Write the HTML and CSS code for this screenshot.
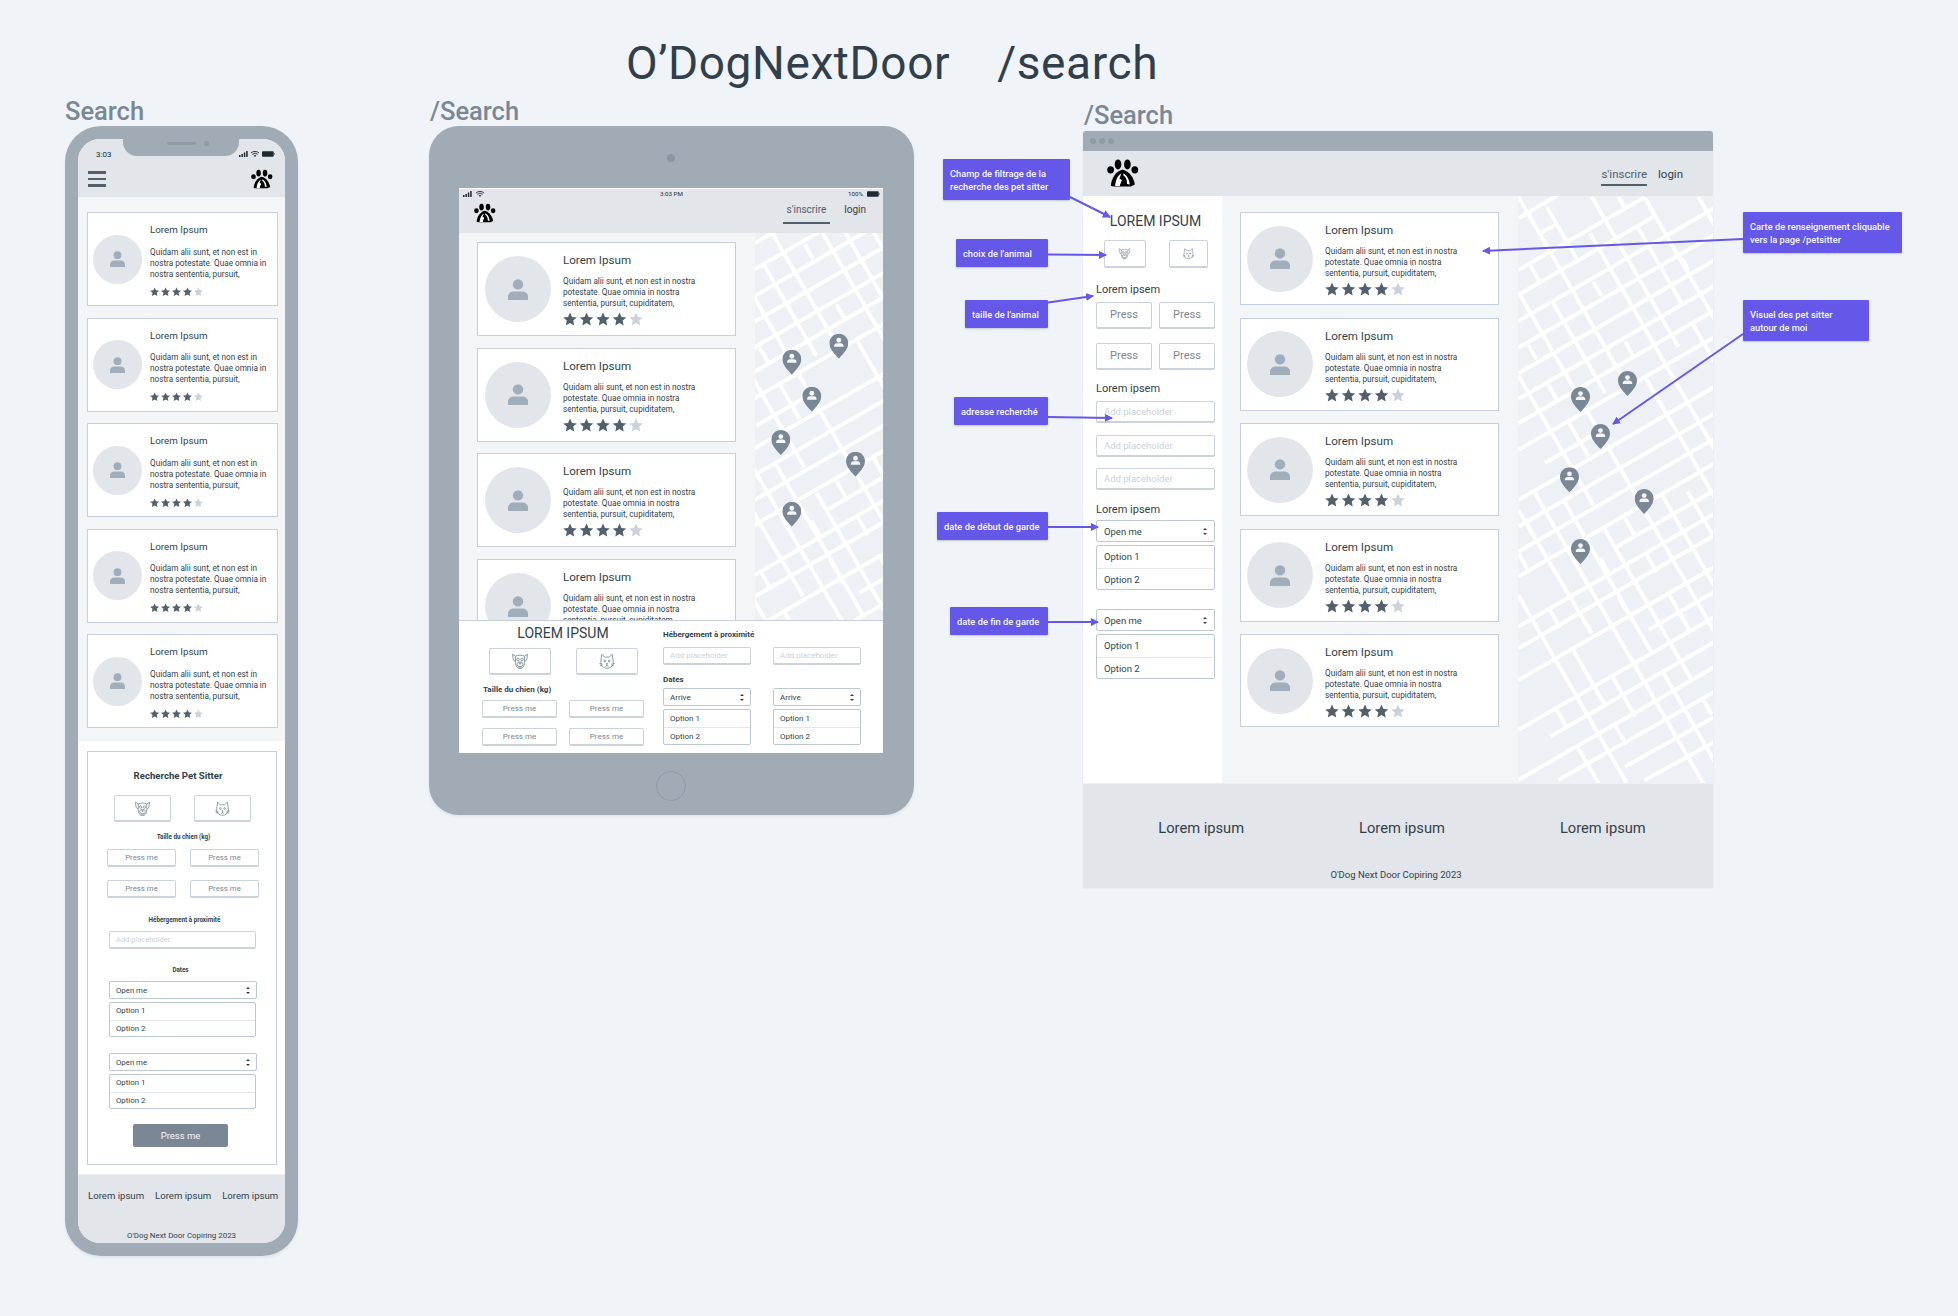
FILE: index.html
```html
<!DOCTYPE html>
<html lang="fr">

<head>
    <meta charset="UTF-8">
    <meta name="viewport" content="width=device-width, initial-scale=1.0">
    <title>O'DogNextDoor /search</title>
    <link rel="stylesheet" href="styles.css">
</head>

<body>
    <!-- icones partagees -->
    <svg class="sprite">
        <defs>
            <symbol id="person" viewBox="0 0 20 21">
                <circle cx="10" cy="5.4" r="5.2" fill="#a0aebb"/>
                <path d="M0 21v-3.2C0 14.6 2.6 12.6 6 12.6h8c3.4 0 6 2 6 5.2V21z" fill="#a0aebb"/>
            </symbol>
            <symbol id="star" viewBox="0 0 14 14">
                <path d="M7 .4l2 4.5 4.8.5-3.6 3.2 1 4.8L7 11l-4.2 2.4 1-4.8L.2 5.4 5 4.9z"/>
            </symbol>
            <symbol id="stars" viewBox="0 0 80 14">
                <use href="#star" x="0" width="14" height="14" fill="#52606d"/>
                <use href="#star" x="16.5" width="14" height="14" fill="#52606d"/>
                <use href="#star" x="33" width="14" height="14" fill="#52606d"/>
                <use href="#star" x="49.5" width="14" height="14" fill="#52606d"/>
                <use href="#star" x="66" width="14" height="14" fill="#cbd2d9"/>
            </symbol>
            <symbol id="logo" viewBox="0 0 32 28">
                <ellipse cx="3.6" cy="10.8" rx="3.4" ry="3.6"/>
                <ellipse cx="11" cy="5.4" rx="3.3" ry="5"/>
                <ellipse cx="20.4" cy="5.4" rx="3.3" ry="5"/>
                <ellipse cx="27.8" cy="10.8" rx="3.4" ry="3.6"/>
                <path d="M3.8 27C4.4 19 9 12.4 15.6 10.6 22.4 12.4 27 19 27.8 25.6L24 27.4H7.4z"/>
                <path d="M8.2 27C8.4 21 11 16.2 14.4 14.6L12.4 19.4 14.8 21 12.8 27zM16.4 14.4C19.4 15.6 22.4 20 22.8 25.6L20 25C20.4 21.6 18.8 17.6 16.4 16.4z" fill="#fff"/>
                <path d="M14.4 23l1.6 4h-3zM17 24.4l2 2.6h-3.2z"/>
            </symbol>
            <symbol id="dog" viewBox="0 0 24 24">
                <g fill="none" stroke="#7b8794" stroke-width="1.1" stroke-linejoin="round">
                    <path d="M6 5.6C8 4 16 4 18 5.6V14c0 5-3 8-6 8s-6-3-6-8z"/>
                    <path d="M6 5.6L2 3l1 7.4L6 13M18 5.6L22 3l-1 7.4L18 13"/>
                    <circle cx="9.4" cy="10" r="1.7"/>
                    <circle cx="14.6" cy="10" r="1.7"/>
                    <ellipse cx="12" cy="16.4" rx="4" ry="3.2"/>
                    <path d="M10.6 15h2.8L12 16.6zM9.6 22l2.4-2.4 2.4 2.4"/>
                </g>
            </symbol>
            <symbol id="cat" viewBox="0 0 24 24">
                <g fill="none" stroke="#7b8794" stroke-width="1.1" stroke-linejoin="round">
                    <path d="M5 3l4.4 4c1.6-.5 3.6-.5 5.2 0L19 3l1.4 11c0 4.6-4 7.6-8.4 7.6S3.6 18.6 3.6 14z"/>
                    <circle cx="9" cy="12" r="1.2"/>
                    <circle cx="15" cy="12" r="1.2"/>
                    <path d="M11 15.4h2L12 16.6zM12 16.6V18l-2 1M12 18l2 1"/>
                    <path d="M2 15.4l4 .8M2.4 18.6l3.8-1M22 15.4l-4 .8M21.6 18.6l-3.8-1"/>
                </g>
            </symbol>
            <symbol id="pin" viewBox="0 0 19 25">
                <path d="M9.5 0C4.3 0 0 4.2 0 9.4c0 6 5.8 11.4 9.5 15.6C13.2 20.8 19 15.4 19 9.4 19 4.2 14.7 0 9.5 0z" fill="#7b8794"/>
                <circle cx="9.5" cy="6.6" r="2.4" fill="#f5f7fa"/>
                <path d="M4.8 13v-.8c0-1.6 1.2-2.6 2.8-2.6h3.8c1.6 0 2.8 1 2.8 2.6v.8z" fill="#f5f7fa"/>
            </symbol>
            <symbol id="signal" viewBox="0 0 9 6">
                <path d="M0 4h1.5v2H0zM2.4 3h1.5v3H2.4zM4.8 1.5h1.5V6H4.8zM7.2 0h1.5v6H7.2z" fill="#1f2933"/>
            </symbol>
            <symbol id="wifi" viewBox="0 0 8 6">
                <path d="M0 2a5.8 5.8 0 0 1 8 0M1.3 3.3a4 4 0 0 1 5.4 0" fill="none" stroke="#1f2933" stroke-width=".9"/>
                <path d="M2.7 4.5a2 2 0 0 1 2.6 0L4 6z" fill="#1f2933"/>
            </symbol>
            <symbol id="battery" viewBox="0 0 14 6">
                <rect width="12.6" height="6" rx="1" fill="#1f2933"/>
                <rect x="13" y="2" width="1" height="2" fill="#7b8794"/>
            </symbol>
            <g id="streets" fill="none" stroke="#fff" stroke-width="12">
                <path d="M10 70L130 0M10 225L390 6M20 294L420 63M10 378L600 38M10 458L600 118M10 535L600 195M10 612L600 272M10 685L600 345M10 765L600 425M90 804L240 717M10 915L600 575M10 995L600 655M10 1070L600 730M10 1145L600 805M300 1058L600 885M10 1295L600 955M10 1360L600 1020M10 1455L600 1115M400 1305L600 1190M10 1605L600 1265M105 1625L600 1340M10 1755L600 1415M130 1755L600 1490M330 1715L600 1565M390 1755L600 1640M75 115L120 90"/>
                <path d="M95 35L185 191M390 545L600 909M390 10L600 374M550 5L600 92M10 5L320 542M518 890L600 1032M225 115L600 765M230 5L490 455M370 100L500 325M10 291L600 1313M115 325L270 594M10 541L235 930M270 1005L530 1455M440 898L600 1175M145 914L410 1373M445 1433L600 1702M10 945L230 1315M60 895L600 1826M10 1201L335 1764"/>
                <path d="M310 5L330 40M45 210L75 262M40 450L65 493M100 570L125 613M235 260L260 303M330 440L355 483M500 190L520 225M160 680L220 784M535 390L600 503M330 970L360 1022M395 1080L425 1132M105 1245L135 1297M255 1090L280 1133M310 1205L350 1274M460 1195L525 1308M175 1365L270 1530M295 1450L360 1563M125 1545L155 1597M190 1660L260 1781M300 1590L335 1650M565 1515L590 1558M10 1075L40 1127"/>
            </g>
            <g id="pins">
                <use href="#pin" x="309" y="528" width="57" height="75"/>
                <use href="#pin" x="168" y="576" width="57" height="75"/>
                <use href="#pin" x="228" y="687" width="57" height="75"/>
                <use href="#pin" x="135" y="817" width="57" height="75"/>
                <use href="#pin" x="359" y="882" width="57" height="75"/>
                <use href="#pin" x="168" y="1032" width="57" height="75"/>
            </g>
            <marker id="arrowhead" viewBox="0 0 8 8" refX="7" refY="4" markerWidth="8" markerHeight="8" markerUnits="userSpaceOnUse" orient="auto">
                <path d="M0 0L8 4L0 8z" fill="#6558e9"/>
            </marker>
        </defs>
    </svg>

    <div class="board">
        <h1 class="title"><span>O’DogNextDoor</span><span>/search</span></h1>

        <!-- mobile -->
        <h2 class="label label-phone">Search</h2>
        <div class="phone">
            <div class="phone-notch"><i></i><b></b></div>
            <div class="phone-screen">
                <div class="phone-head">
                    <div class="phone-status">
                        <span>3:03</span>
                        <div class="status-icons">
                            <svg class="ic-signal"><use href="#signal"/></svg>
                            <svg class="ic-wifi"><use href="#wifi"/></svg>
                            <svg class="ic-battery"><use href="#battery"/></svg>
                        </div>
                    </div>
                    <div class="phone-bar">
                        <div class="burger"><i></i><i></i><i></i></div>
                        <svg class="logo"><use href="#logo"/></svg>
                    </div>
                </div>
                <div class="cards">
                    <div class="card">
                        <div class="avatar"><svg class="person"><use href="#person"/></svg></div>
                        <div class="card-body">
                            <h3>Lorem Ipsum</h3>
                            <p>Quidam alii sunt, et non est in<br>nostra potestate. Quae omnia in<br>nostra sententia, pursuit,</p>
                            <svg class="stars"><use href="#stars"/></svg>
                        </div>
                    </div>
                    <div class="card">
                        <div class="avatar"><svg class="person"><use href="#person"/></svg></div>
                        <div class="card-body">
                            <h3>Lorem Ipsum</h3>
                            <p>Quidam alii sunt, et non est in<br>nostra potestate. Quae omnia in<br>nostra sententia, pursuit,</p>
                            <svg class="stars"><use href="#stars"/></svg>
                        </div>
                    </div>
                    <div class="card">
                        <div class="avatar"><svg class="person"><use href="#person"/></svg></div>
                        <div class="card-body">
                            <h3>Lorem Ipsum</h3>
                            <p>Quidam alii sunt, et non est in<br>nostra potestate. Quae omnia in<br>nostra sententia, pursuit,</p>
                            <svg class="stars"><use href="#stars"/></svg>
                        </div>
                    </div>
                    <div class="card">
                        <div class="avatar"><svg class="person"><use href="#person"/></svg></div>
                        <div class="card-body">
                            <h3>Lorem Ipsum</h3>
                            <p>Quidam alii sunt, et non est in<br>nostra potestate. Quae omnia in<br>nostra sententia, pursuit,</p>
                            <svg class="stars"><use href="#stars"/></svg>
                        </div>
                    </div>
                    <div class="card">
                        <div class="avatar"><svg class="person"><use href="#person"/></svg></div>
                        <div class="card-body">
                            <h3>Lorem Ipsum</h3>
                            <p>Quidam alii sunt, et non est in<br>nostra potestate. Quae omnia in<br>nostra sententia, pursuit,</p>
                            <svg class="stars"><use href="#stars"/></svg>
                        </div>
                    </div>
                </div>
                <div class="phone-panel">
                    <div class="search-card">
                        <h4 class="search-title">Recherche Pet Sitter</h4>
                        <div class="tiles">
                            <div class="tile"><svg class="ic-animal"><use href="#dog"/></svg></div>
                            <div class="tile"><svg class="ic-animal"><use href="#cat"/></svg></div>
                        </div>
                        <h5 class="mini-a">Taille du chien (kg)</h5>
                        <div class="press-grid">
                            <div class="press">Press me</div>
                            <div class="press">Press me</div>
                            <div class="press">Press me</div>
                            <div class="press">Press me</div>
                        </div>
                        <h5 class="mini-b">Hébergement à proximité</h5>
                        <div class="input">Add placeholder</div>
                        <h5 class="mini-c">Dates</h5>
                        <div class="select">Open me<span class="updown"></span></div>
                        <div class="options"><div>Option 1</div><div>Option 2</div></div>
                        <div class="select select-next">Open me<span class="updown"></span></div>
                        <div class="options"><div>Option 1</div><div>Option 2</div></div>
                        <div class="cta">Press me</div>
                    </div>
                </div>
                <div class="phone-foot">
                    <div class="foot-links"><span>Lorem ipsum</span><span>Lorem ipsum</span><span>Lorem ipsum</span></div>
                    <div class="foot-copy">O'Dog Next Door Copiring 2023</div>
                </div>
            </div>
        </div>

        <!-- tablette -->
        <h2 class="label label-tablet">/Search</h2>
        <div class="tablet">
            <div class="camera"></div>
            <div class="tablet-screen">
                <div class="tablet-head">
                    <div class="tablet-status">
                        <div class="status-left">
                            <svg class="ic-signal"><use href="#signal"/></svg>
                            <svg class="ic-wifi"><use href="#wifi"/></svg>
                        </div>
                        <span class="status-time">3:03 PM</span>
                        <div class="status-right">
                            <span>100%</span>
                            <svg class="ic-battery"><use href="#battery"/></svg>
                        </div>
                    </div>
                    <div class="tablet-bar">
                        <svg class="logo"><use href="#logo"/></svg>
                        <nav class="nav">
                            <a class="nav-on">s'inscrire</a>
                            <a>login</a>
                        </nav>
                    </div>
                </div>
                <div class="tablet-main">
                    <div class="cards">
                        <div class="card">
                            <div class="avatar"><svg class="person"><use href="#person"/></svg></div>
                            <div class="card-body">
                                <h3>Lorem Ipsum</h3>
                                <p>Quidam alii sunt, et non est in nostra<br>potestate. Quae omnia in nostra<br>sententia, pursuit, cupiditatem,</p>
                                <svg class="stars"><use href="#stars"/></svg>
                            </div>
                        </div>
                        <div class="card">
                            <div class="avatar"><svg class="person"><use href="#person"/></svg></div>
                            <div class="card-body">
                                <h3>Lorem Ipsum</h3>
                                <p>Quidam alii sunt, et non est in nostra<br>potestate. Quae omnia in nostra<br>sententia, pursuit, cupiditatem,</p>
                                <svg class="stars"><use href="#stars"/></svg>
                            </div>
                        </div>
                        <div class="card">
                            <div class="avatar"><svg class="person"><use href="#person"/></svg></div>
                            <div class="card-body">
                                <h3>Lorem Ipsum</h3>
                                <p>Quidam alii sunt, et non est in nostra<br>potestate. Quae omnia in nostra<br>sententia, pursuit, cupiditatem,</p>
                                <svg class="stars"><use href="#stars"/></svg>
                            </div>
                        </div>
                        <div class="card">
                            <div class="avatar"><svg class="person"><use href="#person"/></svg></div>
                            <div class="card-body">
                                <h3>Lorem Ipsum</h3>
                                <p>Quidam alii sunt, et non est in nostra<br>potestate. Quae omnia in nostra<br>sententia, pursuit, cupiditatem,</p>
                                <svg class="stars"><use href="#stars"/></svg>
                            </div>
                        </div>
                    </div>
                    <svg class="map" viewBox="86 226 384 1161" preserveAspectRatio="none">
                        <use href="#streets"/>
                        <use href="#pins"/>
                    </svg>
                </div>
                <div class="tablet-panel">
                    <div class="panel-left">
                        <h4 class="panel-title">LOREM IPSUM</h4>
                        <div class="tiles">
                            <div class="tile"><svg class="ic-animal"><use href="#dog"/></svg></div>
                            <div class="tile"><svg class="ic-animal"><use href="#cat"/></svg></div>
                        </div>
                        <h5>Taille du chien (kg)</h5>
                        <div class="press-grid">
                            <div class="press">Press me</div>
                            <div class="press">Press me</div>
                            <div class="press">Press me</div>
                            <div class="press">Press me</div>
                        </div>
                    </div>
                    <div class="panel-right">
                        <h5>Hébergement à proximité</h5>
                        <div class="panel-grid">
                            <div class="input">Add placeholder</div>
                            <div class="input">Add placeholder</div>
                        </div>
                        <h5 class="panel-dates">Dates</h5>
                        <div class="panel-grid">
                            <div>
                                <div class="select">Arrive<span class="updown"></span></div>
                                <div class="options"><div>Option 1</div><div>Option 2</div></div>
                            </div>
                            <div>
                                <div class="select">Arrive<span class="updown"></span></div>
                                <div class="options"><div>Option 1</div><div>Option 2</div></div>
                            </div>
                        </div>
                    </div>
                </div>
            </div>
            <div class="home"></div>
        </div>

        <!-- desktop -->
        <h2 class="label label-browser">/Search</h2>
        <div class="browser">
            <div class="browser-bar"><i></i><i></i><i></i></div>
            <div class="browser-head">
                <svg class="logo"><use href="#logo"/></svg>
                <nav class="nav">
                    <a class="nav-on">s'inscrire</a>
                    <a>login</a>
                </nav>
            </div>
            <div class="browser-main">
                <aside class="side">
                    <h4 class="side-title">LOREM IPSUM</h4>
                    <div class="tiles">
                        <div class="tile"><svg class="ic-animal"><use href="#dog"/></svg></div>
                        <div class="tile tile-small"><svg class="ic-animal"><use href="#cat"/></svg></div>
                    </div>
                    <h5>Lorem ipsem</h5>
                    <div class="press-grid">
                        <div class="press">Press</div>
                        <div class="press">Press</div>
                        <div class="press">Press</div>
                        <div class="press">Press</div>
                    </div>
                    <h5>Lorem ipsem</h5>
                    <div class="input-stack">
                        <div class="input">Add placeholder</div>
                        <div class="input">Add placeholder</div>
                        <div class="input">Add placeholder</div>
                    </div>
                    <h5>Lorem ipsem</h5>
                    <div class="select">Open me<span class="updown"></span></div>
                    <div class="options"><div>Option 1</div><div>Option 2</div></div>
                    <div class="select select-next">Open me<span class="updown"></span></div>
                    <div class="options"><div>Option 1</div><div>Option 2</div></div>
                </aside>
                <div class="cards">
                    <div class="card">
                        <div class="avatar"><svg class="person"><use href="#person"/></svg></div>
                        <div class="card-body">
                            <h3>Lorem Ipsum</h3>
                            <p>Quidam alii sunt, et non est in nostra<br>potestate. Quae omnia in nostra<br>sententia, pursuit, cupiditatem,</p>
                            <svg class="stars"><use href="#stars"/></svg>
                        </div>
                    </div>
                    <div class="card">
                        <div class="avatar"><svg class="person"><use href="#person"/></svg></div>
                        <div class="card-body">
                            <h3>Lorem Ipsum</h3>
                            <p>Quidam alii sunt, et non est in nostra<br>potestate. Quae omnia in nostra<br>sententia, pursuit, cupiditatem,</p>
                            <svg class="stars"><use href="#stars"/></svg>
                        </div>
                    </div>
                    <div class="card">
                        <div class="avatar"><svg class="person"><use href="#person"/></svg></div>
                        <div class="card-body">
                            <h3>Lorem Ipsum</h3>
                            <p>Quidam alii sunt, et non est in nostra<br>potestate. Quae omnia in nostra<br>sententia, pursuit, cupiditatem,</p>
                            <svg class="stars"><use href="#stars"/></svg>
                        </div>
                    </div>
                    <div class="card">
                        <div class="avatar"><svg class="person"><use href="#person"/></svg></div>
                        <div class="card-body">
                            <h3>Lorem Ipsum</h3>
                            <p>Quidam alii sunt, et non est in nostra<br>potestate. Quae omnia in nostra<br>sententia, pursuit, cupiditatem,</p>
                            <svg class="stars"><use href="#stars"/></svg>
                        </div>
                    </div>
                    <div class="card">
                        <div class="avatar"><svg class="person"><use href="#person"/></svg></div>
                        <div class="card-body">
                            <h3>Lorem Ipsum</h3>
                            <p>Quidam alii sunt, et non est in nostra<br>potestate. Quae omnia in nostra<br>sententia, pursuit, cupiditatem,</p>
                            <svg class="stars"><use href="#stars"/></svg>
                        </div>
                    </div>
                </div>
                <svg class="map" viewBox="9 3 585 1761" preserveAspectRatio="none">
                    <use href="#streets"/>
                    <use href="#pins"/>
                </svg>
            </div>
            <div class="browser-foot">
                <div class="foot-links"><span>Lorem ipsum</span><span>Lorem ipsum</span><span>Lorem ipsum</span></div>
                <div class="foot-copy">O'Dog Next Door Copiring 2023</div>
            </div>
        </div>

        <!-- annotations -->
        <svg class="arrows" viewBox="0 0 1958 1316">
            <g fill="none" stroke="#6558e9" stroke-width="2" marker-end="url(#arrowhead)">
                <path d="M1070 197L1110 217"/>
                <path d="M1048 254.5L1106 255"/>
                <path d="M1048 302.5L1093 296"/>
                <path d="M1048 417L1112 418"/>
                <path d="M1048 527L1098 527"/>
                <path d="M1048 622L1098 622"/>
                <path d="M1743 239L1483 251"/>
                <path d="M1743 334L1613 424"/>
            </g>
        </svg>
        <div class="note note-filter">Champ de filtrage de la<br>recherche des pet sitter</div>
        <div class="note note-animal">choix de l'animal</div>
        <div class="note note-size">taille de l'animal</div>
        <div class="note note-address">adresse recherché</div>
        <div class="note note-start">date de début de garde</div>
        <div class="note note-end">date de fin de garde</div>
        <div class="note note-card">Carte de renseignement cliquable<br>vers la page /petsitter</div>
        <div class="note note-map">Visuel des pet sitter<br>autour de moi</div>
    </div>
</body>

</html>
```

FILE: styles.css
```css
* {
    box-sizing: border-box;
}

body {
    margin: 0;
    background: #f0f4f8;
    color: #323f4b;
    font-family: Roboto, "Liberation Sans", sans-serif;
}

h1, h2, h3, h4, h5, p {
    margin: 0;
    font-weight: 400;
}

.sprite {
    position: absolute;
    width: 0;
    height: 0;
}

.board {
    position: relative;
    width: 1958px;
    height: 1316px;
    overflow: hidden;
}

.title {
    display: flex;
    justify-content: center;
    gap: 47px;
    padding: 33px 174px 0 0;
    font-size: 46px;
    letter-spacing: .6px;
    line-height: 60px;
    color: #323f4b;
}

/* planches */
.label {
    position: absolute;
    font-size: 25.5px;
    font-weight: 500;
    line-height: 32px;
    color: #7b8794;
}

.label-phone { left: 65px; top: 95px; }
.label-tablet { left: 430px; top: 95px; }
.label-browser { left: 1084px; top: 99px; }

.phone {
    position: absolute;
    left: 65px;
    top: 126px;
    width: 233px;
    height: 1130px;
    padding: 13px;
    background: #a0abb6;
    border-radius: 36px;
    box-shadow: 0 2px 3px rgba(50, 63, 75, .08);
}

.tablet {
    position: absolute;
    left: 429px;
    top: 126px;
    width: 485px;
    height: 689px;
    padding: 62px 30px 0;
    background: #a0abb6;
    border-radius: 30px;
    box-shadow: 0 2px 3px rgba(50, 63, 75, .08);
}

.browser {
    position: absolute;
    left: 1083px;
    top: 131px;
    width: 630px;
    height: 757px;
    box-shadow: 0 0 1px rgba(50, 63, 75, .15);
}

/* elements communs */
.cards {
    display: flex;
    flex-direction: column;
    background: #f4f5f7;
}

.card {
    display: flex;
    align-items: center;
    flex: none;
    background: #fff;
    border: 1px solid #c5d0dc;
}

.avatar {
    display: flex;
    align-items: center;
    justify-content: center;
    flex: none;
    border-radius: 50%;
    background: #e2e5ea;
}

.card-body {
    align-self: stretch;
    white-space: nowrap;
}

.card-body h3 {
    color: #323f4b;
}

.card-body p {
    font-size: 8.2px;
    line-height: 11px;
    color: #323f4b;
}

.stars {
    display: block;
}

.person {
    display: block;
}

.logo {
    display: block;
}

.tiles {
    display: flex;
    justify-content: center;
}

.tile {
    display: flex;
    align-items: center;
    justify-content: center;
    background: #fff;
    border: 1px solid #cbd2d9;
    border-bottom-width: 2px;
    border-radius: 2px;
}

.press-grid {
    display: grid;
}

.press {
    text-align: center;
    color: #7b8794;
    background: #fff;
    border: 1px solid #cbd2d9;
    border-bottom-width: 2px;
    border-radius: 2px;
}

.input {
    color: #cbd2d9;
    background: #fff;
    border: 1px solid #cbd2d9;
    border-bottom-width: 2px;
    border-radius: 2px;
}

.select {
    display: flex;
    align-items: center;
    justify-content: space-between;
    color: #323f4b;
    background: #fff;
    border: 1px solid #bcc8d4;
    border-radius: 2px;
}

.updown {
    display: inline-block;
    position: relative;
    width: 4px;
    height: 7px;
}

.updown::before,
.updown::after {
    content: "";
    position: absolute;
    left: 0;
    border-left: 2px solid transparent;
    border-right: 2px solid transparent;
}

.updown::before {
    top: 0;
    border-bottom: 2.5px solid #323f4b;
}

.updown::after {
    bottom: 0;
    border-top: 2.5px solid #323f4b;
}

.options {
    color: #323f4b;
    background: #fff;
    border: 1px solid #bcc8d4;
    border-radius: 2px;
}

.options div + div {
    border-top: 1px solid #e4e7eb;
}

.map {
    display: block;
    background: #edf0f5;
}

.nav {
    display: flex;
}

.nav a {
    color: #323f4b;
}

.nav .nav-on {
    color: #52606d;
    border-bottom: 2px solid #52606d;
}

.foot-links {
    display: flex;
    color: #323f4b;
}

.foot-copy {
    text-align: center;
    color: #323f4b;
}

.ic-animal {
    display: block;
}

/* mobile */
.phone-notch {
    position: absolute;
    left: 58px;
    top: 13px;
    width: 116px;
    height: 17px;
    background: #a0abb6;
    border-radius: 0 0 14px 14px;
}

.phone-notch i {
    position: absolute;
    left: 44px;
    top: 3px;
    width: 29px;
    height: 3px;
    border-radius: 2px;
    background: #8f9ba7;
}

.phone-notch b {
    position: absolute;
    left: 81px;
    top: 2px;
    width: 5px;
    height: 5px;
    border-radius: 50%;
    background: #8f9ba7;
}

.phone-screen {
    display: flex;
    flex-direction: column;
    height: 100%;
    overflow: hidden;
    background: #fff;
    border-radius: 22px;
}

.phone-head {
    height: 58px;
    flex: none;
    background: #e2e5ea;
}

.phone-status {
    display: flex;
    align-items: center;
    justify-content: space-between;
    height: 26px;
    padding: 4px 10px 0 18px;
    font-size: 8px;
    color: #1f2933;
}

.status-icons {
    display: flex;
    align-items: center;
    gap: 3px;
}

.ic-signal {
    display: block;
    width: 9px;
    height: 6px;
}

.ic-wifi {
    display: block;
    width: 8px;
    height: 6px;
}

.ic-battery {
    display: block;
    width: 13px;
    height: 6px;
}

.phone-bar {
    display: flex;
    align-items: center;
    justify-content: space-between;
    height: 30px;
    padding: 0 12px 2px 9.5px;
}

.burger {
    display: flex;
    flex-direction: column;
    gap: 4px;
    width: 18px;
}

.burger i {
    display: block;
    height: 2.5px;
    background: #52606d;
}

.phone-bar .logo {
    width: 22px;
    height: 20px;
}

.phone .cards {
    flex: none;
    height: 544px;
    gap: 11.5px;
    padding: 15px 7px 0 9px;
}

.phone .card {
    height: 94px;
    width: 191px;
    padding-left: 5px;
    gap: 8px;
}

.phone .avatar {
    width: 49px;
    height: 49px;
}

.phone .person {
    width: 15px;
    height: 16px;
}

.phone .card-body {
    padding-top: 10px;
}

.phone .card-body h3 {
    font-size: 9.8px;
    line-height: 14px;
    margin-bottom: 9.5px;
}

.phone .stars {
    width: 53px;
    height: 9.5px;
    margin-top: 7px;
}

.phone-panel {
    flex: none;
    height: 433px;
    padding: 10px 8px 0 9px;
    background: #fff;
}

.search-card {
    height: 414px;
    padding-top: 17px;
    border: 1px solid #c5d0dc;
}

.search-title {
    font-size: 9.6px;
    font-weight: 700;
    line-height: 14px;
    text-align: center;
    padding-right: 8px;
    color: #323f4b;
}

.search-card .tiles {
    gap: 23px;
    margin-top: 12px;
}

.search-card .tile {
    width: 57px;
    height: 27px;
}

.search-card .ic-animal {
    width: 17px;
    height: 17px;
}

.search-card h5 {
    font-size: 6.3px;
    font-weight: 700;
    line-height: 10px;
    text-align: center;
    color: #323f4b;
}

.search-card .mini-a {
    margin-top: 10px;
    padding-left: 3px;
}

.search-card .mini-b {
    margin-top: 17px;
    padding-left: 5px;
}

.search-card .mini-c {
    margin-top: 16px;
    padding-right: 3px;
}

.search-card .press-grid {
    grid-template-columns: 69px 69px;
    gap: 13px 14px;
    margin: 7px 0 0 19px;
}

.search-card .press {
    height: 18px;
    font-size: 7.8px;
    line-height: 15px;
}

.search-card .input {
    width: 147px;
    height: 18px;
    margin: 6px 0 0 21px;
    padding-left: 6px;
    font-size: 7.5px;
    line-height: 15px;
}

.search-card .select {
    width: 148px;
    height: 18px;
    margin: 6px 0 0 21px;
    padding: 0 6px;
    font-size: 7.8px;
}

.search-card .select-next {
    margin-top: 16px;
}

.search-card .options {
    width: 147px;
    height: 35px;
    margin: 3px 0 0 21px;
    font-size: 7.8px;
    line-height: 16.5px;
}

.search-card .options div {
    padding-left: 6px;
}

.cta {
    width: 95px;
    height: 23px;
    margin: 15px 0 0 45px;
    font-size: 9.5px;
    line-height: 23px;
    text-align: center;
    color: #f5f7fa;
    background: #7b8794;
    border-radius: 2px;
}

.phone-foot {
    flex: 1;
    padding: 14px 0 0 10px;
    background: #e2e5ea;
    border-top: 1px solid #edeff2;
}

.phone-foot .foot-links {
    gap: 11px;
    font-size: 9.6px;
    line-height: 14px;
}

.phone-foot .foot-copy {
    margin-top: 28px;
    padding-right: 10px;
    font-size: 7.9px;
    line-height: 10px;
}

/* tablette */
.camera {
    position: absolute;
    left: 238px;
    top: 28px;
    width: 8px;
    height: 8px;
    border-radius: 50%;
    background: #8a96a3;
}

.home {
    position: absolute;
    left: 227px;
    top: 645px;
    width: 30px;
    height: 30px;
    border: 1.5px solid #8e9aa7;
    border-radius: 50%;
}

.tablet-screen {
    width: 424px;
    height: 565px;
    overflow: hidden;
    background: #fff;
}

.tablet-head {
    height: 45px;
    background: #e2e5ea;
    border-top: 1px solid #fff;
}

.tablet-status {
    display: flex;
    align-items: center;
    justify-content: space-between;
    height: 10px;
    padding: 0 3px 0 4px;
    font-size: 6.2px;
    color: #1f2933;
}

.status-left,
.status-right {
    display: flex;
    align-items: center;
    gap: 4px;
    width: 120px;
}

.status-right {
    justify-content: flex-end;
}

.tablet-bar {
    display: flex;
    justify-content: space-between;
    padding: 4px 17px 0 15px;
}

.tablet-bar .logo {
    width: 22px;
    height: 20px;
}

.tablet-bar .nav {
    gap: 14px;
    font-size: 10px;
    line-height: 12px;
}

.tablet-bar .nav a {
    height: 21px;
    padding-top: 1px;
}

.tablet-bar .nav .nav-on {
    padding: 1px 4px 0;
}

.tablet-main {
    display: grid;
    grid-template-columns: 296px 128px;
    height: 387px;
    overflow: hidden;
}

.tablet .cards {
    gap: 11.7px;
    padding: 9px 0 0 18px;
}

.tablet .card,
.browser .card {
    width: 259px;
    padding-left: 7px;
    gap: 12px;
}

.tablet .card {
    height: 94px;
}

.browser .card {
    height: 93px;
    padding-left: 6px;
    gap: 12px;
}

.tablet .avatar,
.browser .avatar {
    width: 66px;
    height: 66px;
}

.tablet .person,
.browser .person {
    width: 20px;
    height: 21px;
}

.tablet .card-body,
.browser .card-body {
    padding-top: 10px;
}

.tablet .card-body h3,
.browser .card-body h3 {
    font-size: 11.6px;
    line-height: 14px;
    margin-bottom: 9px;
}

.tablet .stars,
.browser .stars {
    width: 80px;
    height: 14px;
    margin-top: 3px;
}

.tablet .map {
    width: 128px;
    height: 387px;
}

.tablet-panel {
    display: flex;
    gap: 19px;
    height: 133px;
    padding: 0 22px 0 23px;
    background: #fff;
    border-top: 1px solid #c5d0dc;
}

.panel-left {
    width: 162px;
}

.panel-title {
    margin-top: 3px;
    font-size: 14px;
    line-height: 18px;
    text-align: center;
}

.panel-left .tiles {
    gap: 25px;
    margin-top: 6px;
}

.panel-left .tile {
    width: 62px;
    height: 27px;
}

.panel-left .ic-animal {
    width: 18px;
    height: 18px;
}

.tablet-panel h5 {
    font-size: 8px;
    font-weight: 700;
    line-height: 10px;
}

.panel-left h5 {
    margin-top: 10px;
    padding-left: 1px;
}

.panel-left .press-grid {
    grid-template-columns: 75px 75px;
    gap: 10px 12px;
    margin-top: 5px;
}

.panel-left .press {
    height: 18px;
    font-size: 8px;
    line-height: 15px;
}

.panel-right {
    width: 198px;
    padding-top: 9px;
}

.panel-grid {
    display: grid;
    grid-template-columns: 88px 88px;
    gap: 22px;
    margin-top: 7px;
}

.tablet-panel .input {
    height: 18px;
    padding-left: 6px;
    font-size: 8px;
    line-height: 15px;
}

.tablet-panel .panel-dates {
    margin-top: 10px;
}

.panel-dates + .panel-grid {
    margin-top: 3px;
}

.tablet-panel .select {
    height: 18px;
    padding: 0 6px;
    font-size: 8px;
}

.tablet-panel .options {
    height: 36px;
    margin-top: 3px;
    font-size: 8px;
    line-height: 17px;
}

.tablet-panel .options div {
    padding-left: 6px;
}

/* navigateur */
.browser-bar {
    display: flex;
    align-items: center;
    gap: 3px;
    height: 20px;
    padding-left: 7px;
    background: #a0abb6;
    border-radius: 3px 3px 0 0;
}

.browser-bar i {
    width: 6px;
    height: 6px;
    border-radius: 50%;
    background: #8f9ba7;
}

.browser-head {
    display: flex;
    justify-content: space-between;
    height: 45px;
    padding: 8px 30px 0 24px;
    background: #e2e5ea;
}

.browser-head .logo {
    width: 32px;
    height: 28px;
}

.browser-head .nav {
    gap: 11px;
    font-size: 11.5px;
    line-height: 14px;
}

.browser-head .nav a {
    height: 27px;
    padding-top: 8px;
}

.browser-main {
    display: grid;
    grid-template-columns: 139px 296px 195px;
    height: 587px;
    overflow: hidden;
    background: #f4f5f7;
}

.side {
    padding: 15px 7px 0 13px;
    background: #fff;
}

.side-title {
    font-size: 14px;
    line-height: 20px;
    text-align: center;
}

.side .tiles {
    gap: 23px;
    margin-top: 9px;
}

.side .tile {
    width: 42px;
    height: 28px;
}

.side .tile-small {
    width: 39px;
}

.side .ic-animal {
    width: 13px;
    height: 13px;
}

.side h5 {
    margin-top: 12px;
    font-size: 11px;
    line-height: 14px;
}

.side .tiles + h5 {
    margin-top: 15px;
}

.side .press-grid {
    grid-template-columns: 56px 56px;
    gap: 14px 7px;
    margin-top: 5px;
}

.side .press {
    height: 27px;
    font-size: 11px;
    line-height: 24px;
}

.input-stack {
    display: flex;
    flex-direction: column;
    gap: 11.5px;
    margin-top: 5px;
}

.input-stack + h5 {
    margin-top: 13px;
}

.side .input {
    height: 22px;
    padding-left: 7px;
    font-size: 9.5px;
    line-height: 19px;
}

.side .select {
    height: 22px;
    margin-top: 3px;
    padding: 0 7px;
    font-size: 9.5px;
}

.side .select-next {
    margin-top: 19px;
}

.side .options {
    height: 45px;
    margin-top: 3px;
    font-size: 9.5px;
    line-height: 21.5px;
}

.side .options div {
    padding-left: 7px;
}

.browser .cards {
    gap: 12.6px;
    padding: 16px 0 0 18px;
}

.browser .map {
    width: 195px;
    height: 587px;
}

.browser-foot {
    height: 105px;
    padding-top: 36px;
    background: #e2e5ea;
    border-top: 1px solid #edeff2;
}

.browser-foot .foot-links {
    justify-content: center;
    gap: 115px;
    padding-left: 8px;
    font-size: 14.7px;
    line-height: 16px;
}

.browser-foot .foot-copy {
    margin-top: 33px;
    padding-right: 4px;
    font-size: 9.5px;
    line-height: 12px;
}

/* annotations */
.arrows {
    position: absolute;
    left: 0;
    top: 0;
    width: 1958px;
    height: 1316px;
    pointer-events: none;
}

.note {
    position: absolute;
    display: flex;
    align-items: center;
    padding: 1px 0 0 7px;
    font-size: 9.3px;
    font-weight: 500;
    line-height: 13.3px;
    color: #f5f7fa;
    background: #6558e9;
    border-radius: 1px;
    box-shadow: 0 1px 2px rgba(50, 63, 75, .25);
}

.note-filter { left: 943px; top: 159px; width: 127px; height: 41px; }
.note-animal { left: 956px; top: 239px; width: 92px; height: 28px; }
.note-size { left: 965px; top: 300px; width: 83px; height: 28px; }
.note-address { left: 954px; top: 397px; width: 94px; height: 28px; }
.note-start { left: 937px; top: 512px; width: 111px; height: 28px; }
.note-end { left: 950px; top: 607px; width: 98px; height: 28px; }
.note-card { left: 1743px; top: 212px; width: 159px; height: 41px; }
.note-map { left: 1743px; top: 300px; width: 126px; height: 41px; }
```
